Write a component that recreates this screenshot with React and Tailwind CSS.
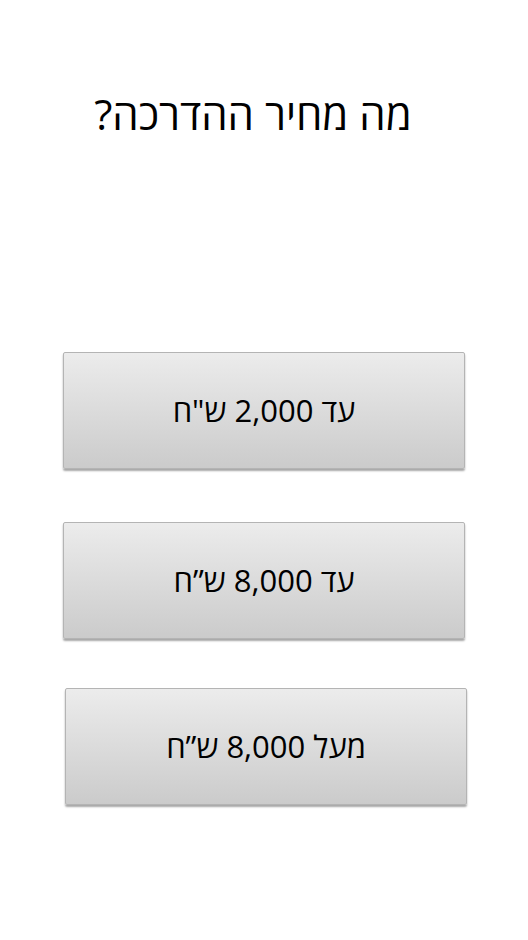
export default function App() {
  const options = [
    { label: 'עד 2,000 ש"ח', shift: "" },
    { label: "עד 8,000 ש”ח", shift: "" },
    { label: "מעל 8,000 ש”ח", shift: "translate-x-[2px] mt-[-4px]" },
  ];

  return (
    <div dir="rtl" className="w-[528px] h-[940px] bg-white flex flex-col items-center" style={{ fontFamily: '"Open Sans", "Noto Sans", "DejaVu Sans", sans-serif' }}>
      <h1 className="mt-[86px] mr-[22px] text-[42px] leading-[56px] font-normal text-black">מה מחיר ההדרכה?</h1>
      <div className="mt-[210px] flex flex-col gap-[53px]">
        {options.map((o) => (
          <button
            key={o.label}
            className={`w-[402px] h-[117px] flex items-center justify-center border border-[#b4b4b4] rounded-[2px] bg-gradient-to-b from-[#ececec] to-[#cbcbcb] shadow-[0_2px_2px_rgba(0,0,0,0.35)] text-[31px] text-black ${o.shift}`}
          >
            {o.label}
          </button>
        ))}
      </div>
    </div>
  );
}
